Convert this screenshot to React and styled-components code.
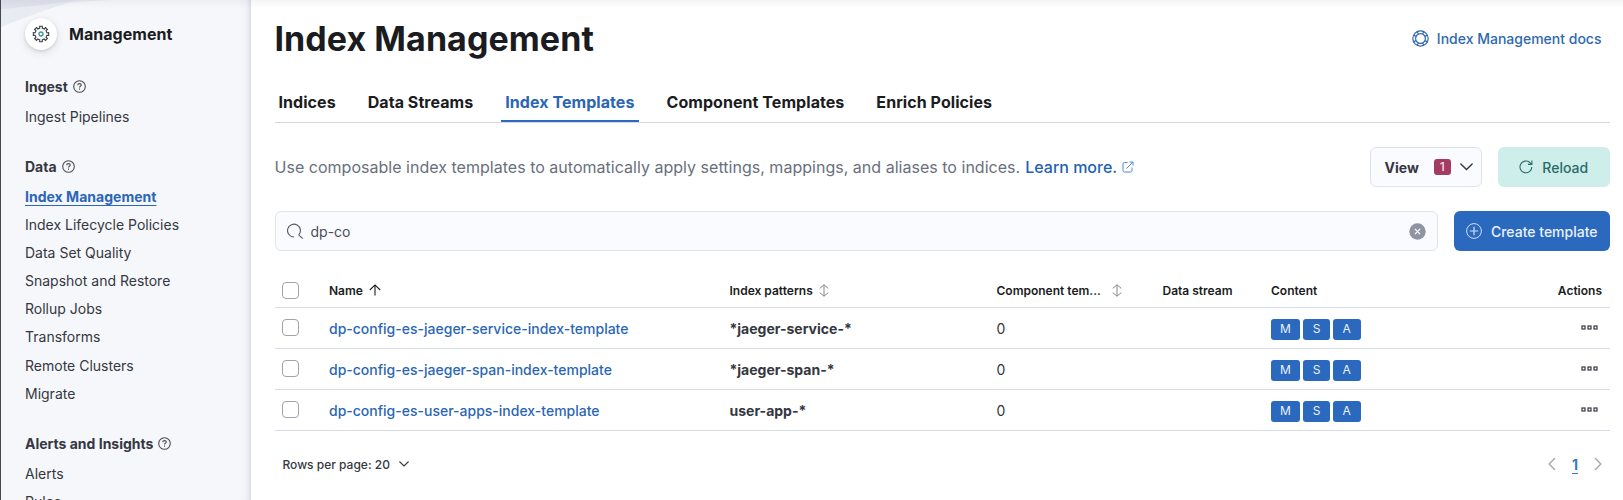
import React from "react";
import styled, { createGlobalStyle, css } from "styled-components";

const Global = createGlobalStyle`
  *, *::before, *::after { box-sizing: border-box; }
  html, body { margin: 0; padding: 0; }
  body {
    font-family: Inter, "Liberation Sans", sans-serif;
    font-size: 14px;
    color: #343741;
    background: #fff;
    overflow: hidden;
  }
  h1, h2, h3, p, ul { margin: 0; padding: 0; }
  button { font: inherit; cursor: pointer; }
`;

const Page = styled.div`
  position: relative;
  display: flex;
  width: 100%;
  height: 500px;
  overflow: hidden;
`;

const TopShade = styled.div`
  position: absolute;
  inset: 0 0 auto 0;
  height: 8px;
  background: linear-gradient(rgba(60, 62, 70, 0.05), rgba(60, 62, 70, 0));
  pointer-events: none;
`;

const Sidebar = styled.nav`
  position: relative;
  flex: 0 0 251px;
  height: 500px;
  padding: 18px 24px 0;
  overflow: hidden;
  background: linear-gradient(to right, #f6f7fb 238px, #f2f3f8 245px, #e6e8ef 248px, #d9dce5 250px);
  border-left: 1px solid #46474d;
`;

const Backdrop = styled.svg`
  position: absolute;
  left: 0;
  top: 0;
`;

const Brand = styled.div`
  position: relative;
  display: flex;
  align-items: center;
  gap: 12px;
  height: 32px;
`;

const Avatar = styled.span`
  display: flex;
  align-items: center;
  justify-content: center;
  width: 32px;
  height: 32px;
  border-radius: 50%;
  background: #fff;
  box-shadow: 0 1px 3px rgba(60, 64, 80, 0.18), 0 3px 8px rgba(60, 64, 80, 0.12);
`;

const BrandName = styled.h2`
  font-size: 16px;
  line-height: 24px;
  font-weight: 700;
  letter-spacing: 0.04px;
  color: #1a1c21;
`;

const Section = styled.section`
  margin-top: ${(p) => p.$top}px;
`;

const SectionTitle = styled.h3`
  display: flex;
  align-items: center;
  gap: 5px;
  height: 20px;
  font-size: 14px;
  font-weight: 700;
  color: #343741;
`;

const NavList = styled.ul`
  list-style: none;
  padding-top: 6px;
`;

const NavItem = styled.li`
  display: flex;
  align-items: center;
  height: 28.15px;
  font-size: 14px;
  white-space: nowrap;
  ${(p) =>
    p.$active &&
    css`
      font-weight: 700;
      letter-spacing: 0.02px;
      color: #2b66b8;
      text-decoration: underline;
      text-decoration-thickness: 1px;
      text-underline-offset: 3px;
      text-decoration-skip-ink: auto;
    `}
`;

const Main = styled.main`
  flex: 1;
  min-width: 0;
  padding: 18px 13px 0 23.5px;
  display: flex;
  flex-direction: column;
`;

const Header = styled.header`
  display: flex;
  justify-content: space-between;
  height: 42px;
`;

const Title = styled.h1`
  font-size: 34px;
  line-height: 42px;
  font-weight: 700;
  letter-spacing: 0.06px;
  color: #1a1c21;
`;

const DocsLink = styled.a`
  display: flex;
  align-items: center;
  gap: 8px;
  height: 40px;
  padding-right: 8.5px;
  font-size: 14px;
  font-weight: 500;
  color: #2f68ad;
`;

const Tabs = styled.div`
  display: flex;
  gap: 24px;
  height: 45px;
  margin-top: 18px;
  border-bottom: 1px solid #d3dae6;
`;

const Tab = styled.button`
  height: 44px;
  padding: 5px 4px 0;
  border: 0;
  border-bottom: 2px solid ${(p) => (p.$active ? "#2b6abf" : "transparent")};
  background: none;
  font-size: 16px;
  font-weight: 700;
  letter-spacing: 0.06px;
  color: ${(p) => (p.$active ? "#2b66b4" : "#1a1c21")};
`;

const Intro = styled.div`
  display: flex;
  align-items: center;
  height: 40px;
  margin-top: 24px;
`;

const IntroText = styled.p`
  display: flex;
  align-items: center;
  flex: 1;
  font-size: 16px;
  letter-spacing: 0.02px;
  color: #69707d;
  white-space: nowrap;
`;

const InlineLink = styled.a`
  display: flex;
  align-items: center;
  gap: 5px;
  margin-left: 5px;
  font-weight: 500;
  letter-spacing: 0;
  color: #1f61b3;
`;

const Button = styled.button`
  display: flex;
  align-items: center;
  justify-content: center;
  gap: 9px;
  width: ${(p) => p.$width}px;
  height: 40px;
  padding: 0;
  border: 0;
  border-radius: 6px;
  font-size: 14px;
  font-weight: 500;
`;

const ViewButton = styled(Button)`
  justify-content: flex-start;
  gap: 0;
  padding-left: 14px;
  border: 1px solid #dfe2ea;
  background: #fafbfe;
  font-weight: 700;
  color: #343741;
`;

const Count = styled.span`
  width: 17px;
  height: 16px;
  margin: 0 9px 0 15px;
  border-radius: 3px;
  background: #a33b63;
  color: #f6dfe8;
  font-size: 12px;
  line-height: 16px;
  font-weight: 500;
  text-align: center;
`;

const ReloadButton = styled(Button)`
  margin-left: 15.5px;
  background: #cdeeeb;
  color: #2c6a68;
`;

const CreateButton = styled(Button)`
  background: #2b69be;
  color: #eaf1fb;
`;

const SearchRow = styled.div`
  display: flex;
  justify-content: space-between;
  margin-top: 24px;
`;

const SearchBox = styled.div`
  display: flex;
  align-items: center;
  width: 1163px;
  height: 40px;
  padding: 0 11px;
  border: 1px solid #e1e4ea;
  border-radius: 6px;
  background: #fafbfe;
`;

const SearchText = styled.span`
  flex: 1;
  margin-left: 7px;
  padding-top: 1px;
  font-size: 14px;
  color: #4b4e57;
`;

const columns = css`
  display: grid;
  grid-template-columns: 54.5px 400.5px 267px 166px 108.5px 1fr auto;
  align-items: center;
  padding-right: 8px;
`;

const HeadRow = styled.div`
  ${columns}
  height: 41.5px;
  margin-top: 15px;
  padding-top: 8px;
  border-bottom: 1px solid #d8dee9;
  font-size: 12px;
  font-weight: 600;
  color: #1a1c21;
`;

const HeadCell = styled.span`
  display: flex;
  align-items: center;
  gap: ${(p) => p.$gap || 6}px;
  justify-content: ${(p) => (p.$end ? "flex-end" : "flex-start")};
  white-space: nowrap;
`;

const Row = styled.div`
  ${columns}
  height: 41.1px;
  padding-top: 1.5px;
  border-bottom: 1px solid #d8dee9;
`;

const Checkbox = styled.span`
  width: 17px;
  height: 17px;
  margin: 0 0 ${(p) => (p.$head ? 0 : 2)}px 7.5px;
  border: 1px solid #a2a3a8;
  border-radius: 4px;
  background: #fff;
`;

const RowLink = styled.a`
  font-weight: 500;
  color: #2b66b4;
`;

const Pattern = styled.span`
  font-weight: 700;
`;

const BadgeGroup = styled.span`
  display: flex;
  gap: 3px;
`;

const Badge = styled.span`
  width: ${(p) => p.$width}px;
  height: 20.5px;
  margin-top: 2px;
  border-radius: 3px;
  background: #2b69be;
  color: #eaf2fc;
  font-size: 12px;
  line-height: 20px;
  font-weight: 400;
  text-align: center;
`;

const Dots = styled.span`
  display: flex;
  justify-content: flex-end;
  padding: 0 4px 2px 0;
`;

const Footer = styled.footer`
  display: flex;
  align-items: center;
  justify-content: space-between;
  height: 24px;
  margin-top: 21.5px;
  padding: 0 8px;
`;

const PageSize = styled.span`
  display: flex;
  align-items: center;
  gap: 9px;
  font-size: 12px;
  font-weight: 500;
`;

const Pager = styled.span`
  display: flex;
  align-items: center;
  gap: 16px;
`;

const CurrentPage = styled.span`
  font-size: 14px;
  font-weight: 700;
  color: #3578cc;
  text-decoration: underline;
  text-underline-offset: 3px;
`;

function Svg({ size = 16, width, height, box = "0 0 16 16", color = "currentColor", stroke = 1, children }) {
  return (
    <svg
      width={width || size}
      height={height || size}
      viewBox={box}
      fill="none"
      stroke={color}
      strokeWidth={stroke}
      style={{ flex: "none" }}
    >
      {children}
    </svg>
  );
}

const teeth = Array.from({ length: 8 }, (_, i) => {
  const at = (deg, r) => {
    const a = ((i * 45 + deg) * Math.PI) / 180;
    return `${(9 + r * Math.sin(a)).toFixed(2)} ${(9 - r * Math.cos(a)).toFixed(2)}`;
  };
  return `${i ? "L" : "M"}${at(-10, 7.8)}L${at(10, 7.8)}L${at(12, 6)}L${at(33, 6)}`;
}).join("");

const GearIcon = () => (
  <Svg size={18} box="0 0 18 18" color="#3d4048" stroke={1.1}>
    <path d={`${teeth}Z`} />
    <circle cx="9" cy="9" r="2" stroke="#3a9790" strokeWidth="1.3" />
  </Svg>
);

const HelpIcon = () => (
  <Svg size={13} box="0 0 13 13" color="#4a4d57" stroke={1.1}>
    <circle cx="6.5" cy="6.5" r="5.8" />
    <path d="M4.7 5.2c0-1 .8-1.6 1.8-1.6s1.8.6 1.8 1.5c0 1.2-1.8 1.2-1.8 2.4M6.5 8.6v1.1" />
  </Svg>
);

const LifebuoyIcon = () => (
  <Svg size={17} box="0 0 17 17" stroke={1.2}>
    <circle cx="8.5" cy="8.5" r="7.7" />
    <circle cx="8.5" cy="8.5" r="4.9" />
    <path d="M5.2 1.7l1.200 2.300M11.800 1.700l-1.200 2.300M5.200 15.300l1.200-2.300M11.800 15.300l-1.200-2.300M1.700 5.200l2.300 1.200M1.700 11.800l2.300-1.200M15.300 5.200l-2.300 1.200M15.300 11.800l-2.300-1.200" />
  </Svg>
);

const ExternalIcon = () => (
  <Svg size={12} box="0 0 12 12" color="#4d8ad0">
    <path d="M5.5 1.5H2.5a1.5 1.5 0 0 0-1.5 1.5v6.500a1.500 1.500 0 0 0 1.500 1.500h6a1.500 1.500 0 0 0 1.500-1.500V6.500M7.500 1H11v3.500M11 1L4.500 7.500" />
  </Svg>
);

const SearchIcon = () => (
  <Svg size={17} box="0 0 18 18" color="#595c65" stroke={1.2}>
    <path d="M7.400 14.800a6.800 6.800 0 1 1 4.900-2.100M12.300 12.500l4.500 4" />
  </Svg>
);

const ClearIcon = () => (
  <Svg size={17} box="0 0 17 17">
    <circle cx="8.500" cy="8.500" r="8.200" fill="#8e94a3" stroke="none" />
    <path d="M5.900 5.900l5.200 5.200M11.100 5.900l-5.200 5.200" stroke="#fff" strokeWidth="1.300" />
  </Svg>
);

const ChevronDown = ({ width = 13, stroke = 1.4 }) => (
  <Svg width={width} height={width * 0.6} box="0 0 13 8" stroke={stroke}>
    <path d="M.7 1l5.800 5.600L12.300 1" strokeLinecap="round" />
  </Svg>
);

const PagerArrow = ({ next }) => (
  <Svg width={8} height={14} box="0 0 8 14" color="#a3a8b5" stroke={1.4}>
    <path d={next ? "M1 1l5.800 6L1 13" : "M7 1L1.200 7 7 13"} />
  </Svg>
);

const RefreshIcon = () => (
  <Svg size={14} box="0 0 14 14" stroke={1.1}>
    <path d="M12.800 7A5.900 5.900 0 1 1 10.600 2.300L12.300 4.200M12.900.500v3.900H9" />
  </Svg>
);

const PlusCircleIcon = () => (
  <Svg size={16} color="#cfe0f6">
    <circle cx="8" cy="8" r="7.400" />
    <path d="M8 3.800v8.400M3.800 8h8.400" strokeWidth="1.200" />
  </Svg>
);

const SortUpIcon = () => (
  <Svg width={12} height={12} box="0 0 12 12" stroke={1.1}>
    <path d="M6 11.500V1M.800 6L6 .900 11.200 6" />
  </Svg>
);

const SortIcon = () => (
  <Svg width={10} height={13} box="0 0 10 13" color="#85888f">
    <path d="M5 .800v11.400M.700 4.400L5 .800l4.300 3.600M.700 8.600L5 12.200l4.300-3.600" />
  </Svg>
);

const DotsIcon = () => (
  <Svg width={17} height={5} box="0 0 17 5" color="#343741" stroke={1.2}>
    <rect x="1" y="1" width="3" height="3" />
    <rect x="7" y="1" width="3" height="3" />
    <rect x="13" y="1" width="3" height="3" />
  </Svg>
);

const sections = [
  { title: "Ingest", top: 26, items: ["Ingest Pipelines"] },
  {
    title: "Data",
    top: 26,
    items: [
      "Index Management",
      "Index Lifecycle Policies",
      "Data Set Quality",
      "Snapshot and Restore",
      "Rollup Jobs",
      "Transforms",
      "Remote Clusters",
      "Migrate",
    ],
  },
  { title: "Alerts and Insights", top: 26, items: ["Alerts", "Rules"] },
];

const tabs = ["Indices", "Data Streams", "Index Templates", "Component Templates", "Enrich Policies"];

const templates = [
  { name: "dp-config-es-jaeger-service-index-template", pattern: "*jaeger-service-*" },
  { name: "dp-config-es-jaeger-span-index-template", pattern: "*jaeger-span-*" },
  { name: "dp-config-es-user-apps-index-template", pattern: "user-app-*" },
];

const badges = [
  ["M", 29],
  ["S", 27],
  ["A", 27.5],
];

export default function App() {
  return (
    <Page>
      <Global />
      <Sidebar>
        <Backdrop width="130" height="30" viewBox="0 0 130 30">
          <path d="M0 27C28 16 46 9 68 3Q88 1 112 0H0Z" fill="#e9ebf3" />
          <path d="M0 9Q30 7 78 0H0Z" fill="#dfe2ec" />
        </Backdrop>
        <Brand>
          <Avatar>
            <GearIcon />
          </Avatar>
          <BrandName>Management</BrandName>
        </Brand>
        {sections.map((s) => (
          <Section key={s.title} $top={s.top}>
            <SectionTitle>
              {s.title}
              <HelpIcon />
            </SectionTitle>
            <NavList>
              {s.items.map((item) => (
                <NavItem key={item} $active={item === "Index Management"}>
                  {item}
                </NavItem>
              ))}
            </NavList>
          </Section>
        ))}
      </Sidebar>
      <Main>
        <Header>
          <Title>Index Management</Title>
          <DocsLink>
            <LifebuoyIcon />
            Index Management docs
          </DocsLink>
        </Header>
        <Tabs>
          {tabs.map((t) => (
            <Tab key={t} $active={t === "Index Templates"}>
              {t}
            </Tab>
          ))}
        </Tabs>
        <Intro>
          <IntroText>
            Use composable index templates to automatically apply settings, mappings, and aliases to indices.
            <InlineLink>
              Learn more.
              <ExternalIcon />
            </InlineLink>
          </IntroText>
          <ViewButton $width={112.5}>
            View
            <Count>1</Count>
            <ChevronDown />
          </ViewButton>
          <ReloadButton $width={112.5}>
            <RefreshIcon />
            Reload
          </ReloadButton>
        </Intro>
        <SearchRow>
          <SearchBox>
            <SearchIcon />
            <SearchText>dp-co</SearchText>
            <ClearIcon />
          </SearchBox>
          <CreateButton $width={156.5}>
            <PlusCircleIcon />
            Create template
          </CreateButton>
        </SearchRow>
        <HeadRow>
          <Checkbox $head />
          <HeadCell>
            Name
            <SortUpIcon />
          </HeadCell>
          <HeadCell>
            Index patterns
            <SortIcon />
          </HeadCell>
          <HeadCell $gap={11}>
            Component tem...
            <SortIcon />
          </HeadCell>
          <HeadCell>Data stream</HeadCell>
          <HeadCell>Content</HeadCell>
          <HeadCell $end>Actions</HeadCell>
        </HeadRow>
        {templates.map((t) => (
          <Row key={t.name}>
            <Checkbox />
            <RowLink>{t.name}</RowLink>
            <Pattern>{t.pattern}</Pattern>
            <span>0</span>
            <span />
            <BadgeGroup>
              {badges.map(([label, width]) => (
                <Badge key={label} $width={width}>
                  {label}
                </Badge>
              ))}
            </BadgeGroup>
            <Dots>
              <DotsIcon />
            </Dots>
          </Row>
        ))}
        <Footer>
          <PageSize>
            Rows per page: 20
            <ChevronDown width={10} />
          </PageSize>
          <Pager>
            <PagerArrow />
            <CurrentPage>1</CurrentPage>
            <PagerArrow next />
          </Pager>
        </Footer>
      </Main>
      <TopShade />
    </Page>
  );
}
